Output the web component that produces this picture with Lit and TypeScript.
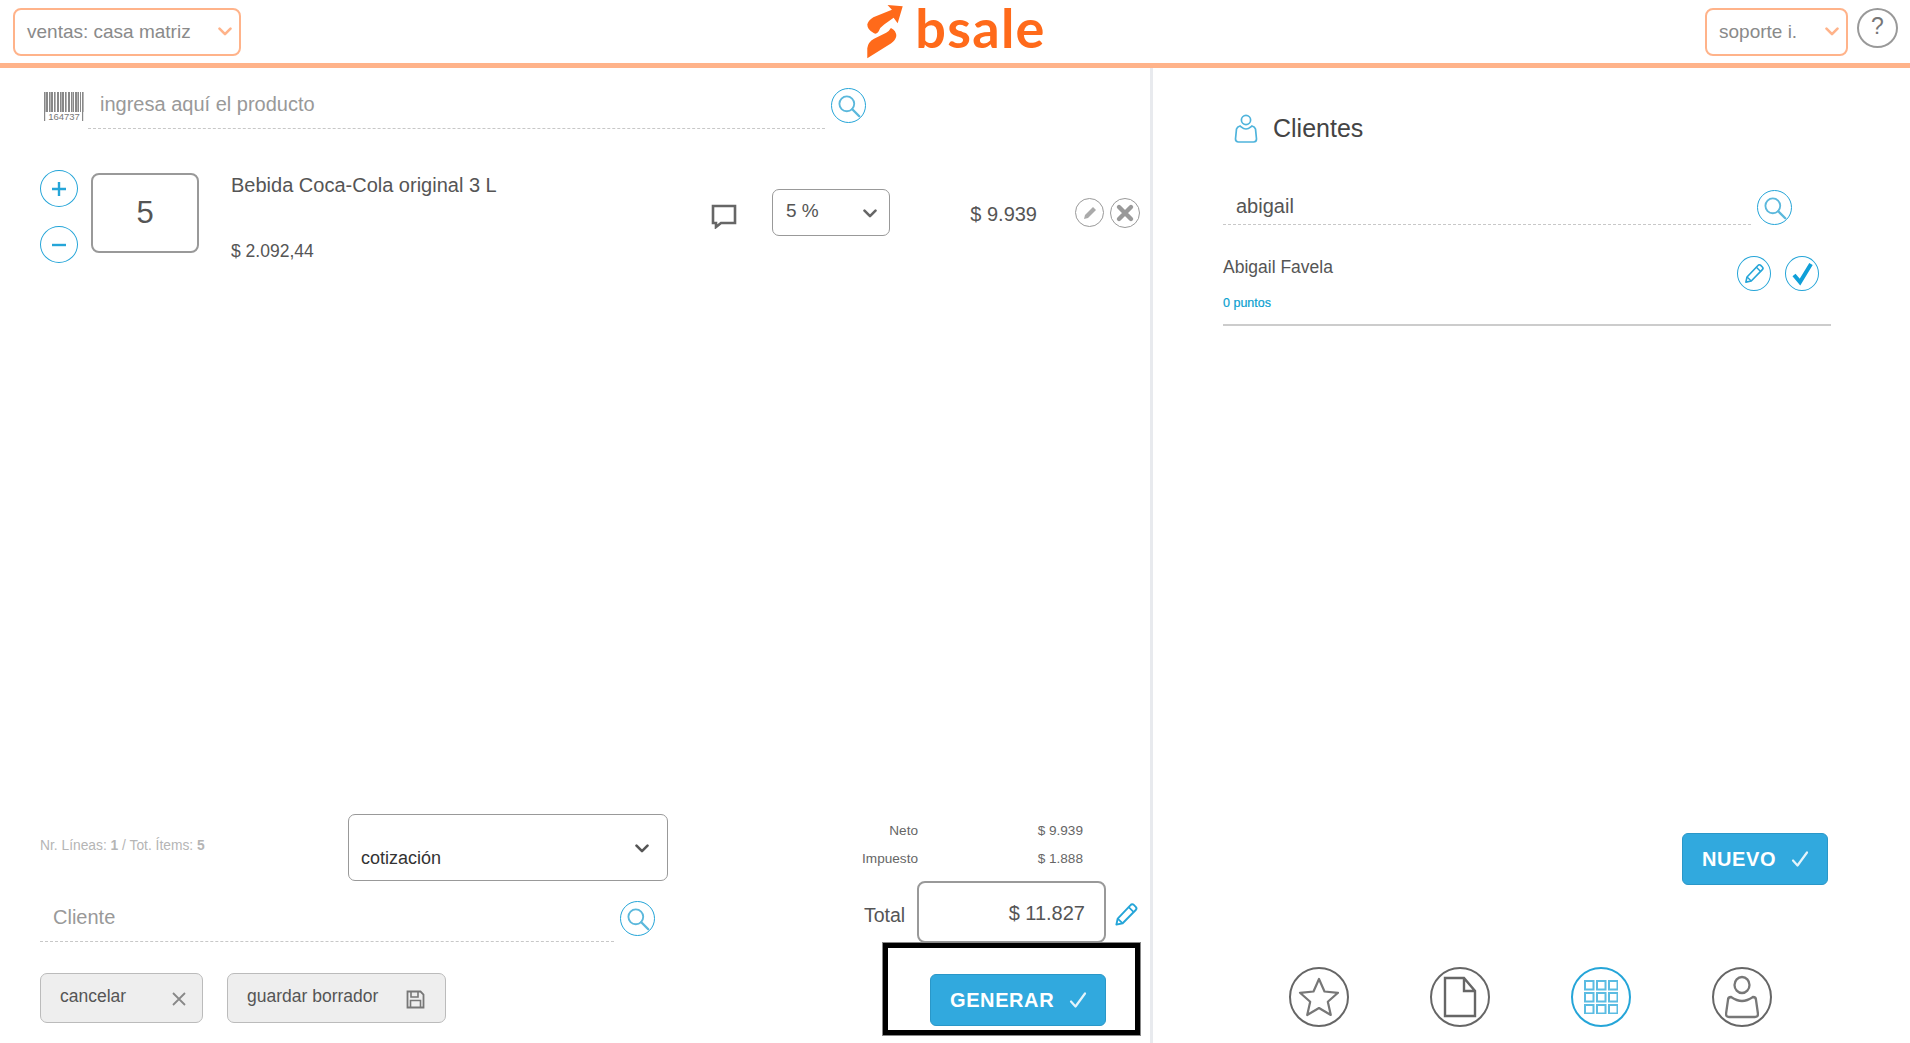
import { LitElement, html, css, svg } from "lit";
import { customElement } from "lit/decorators.js";

const chevron = (c: string, w = 14, sw = 2.6) => html`<svg width=${w} height=${w * 0.65} viewBox="0 0 14 9"><path d="M1.5 1.5 7 7l5.5-5.5" fill="none" stroke=${c} stroke-width=${sw} stroke-linecap="round" stroke-linejoin="round"/></svg>`;
const searchIcon = html`<span class="circ search"><svg width="24" height="24" viewBox="0 0 22 22"><circle cx="9" cy="9" r="6.8" fill="none" stroke="#5bb8dc" stroke-width="1.7"/><path d="m14 14 6.400 6.400" stroke="#5bb8dc" stroke-width="2.200" stroke-linecap="round"/></svg></span>`;
const pencilPath = svg`<path d="M3 21l1.200-5.400L15.600 3.600a2 2 0 0 1 2.900-.1l1.700 1.700a2 2 0 0 1 0 2.800L8.600 19.800z" fill="none" stroke="#25a5d8" stroke-width="1.700" stroke-linejoin="round"/><path d="M14 5.500l4.600 4.600M4.200 15.600l4.400 4.200" stroke="#25a5d8" stroke-width="1.500" fill="none"/>`;
const tick = (w: number) => html`<svg width=${w} height=${w} viewBox="0 0 20 20"><path d="M3 11.500 7.500 16.500 17 3.500" fill="none" stroke="#e4f4fb" stroke-width="2.200" stroke-linecap="round" stroke-linejoin="round"/></svg>`;
const barcodeBars = [0,2,3,5,7,8,10,13,14,16,18,19,21,24,25,27,29,31,32,34,36,38];

@customElement("app-root")
export class AppRoot extends LitElement {
  static styles = css`
    :host { display: block; width: 1910px; height: 1043px; overflow: hidden; background: #fff; font-family: "Liberation Sans", Arial, sans-serif; color: #555; }
    * { box-sizing: border-box; }
    .header { height: 68px; border-bottom: 5px solid #ffb38a; display: grid; grid-template-columns: 1fr auto 1fr; padding: 8px 12px 0 13px; }
    .hsel { height: 48px; border: 2px solid #ffb38a; border-radius: 8px; display: flex; align-items: center; justify-content: space-between; padding: 0 7px 0 12px; font-size: 19px; color: #8a8a8a; }
    .hsel.a { width: 228px; }
    .hsel.b { width: 143px; }
    .hright { display: flex; justify-content: flex-end; gap: 9px; }
    .help { width: 41px; height: 40px; border: 2px solid #999; border-radius: 50%; display: flex; align-items: center; justify-content: center; font-size: 23px; color: #777; padding-bottom: 3px; }
    .logo { display: flex; align-items: flex-start; gap: 12px; margin-top: -3px; margin-left: 2px; }
    .word { font-family: "Lato", sans-serif; font-weight: 700; font-size: 54px; line-height: 52px; color: #ff6a1a; letter-spacing: 1.300px; margin-top: -3px; }
    .main { display: flex; height: 975px; }
    .left { width: 1153px; border-right: 3px solid #e8eaee; display: flex; flex-direction: column; }
    .right { flex: 1; padding: 43px 79px 16px 70px; display: flex; flex-direction: column; }
    .circ { flex: none; display: flex; align-items: center; justify-content: center; border-radius: 50%; border: 1.5px solid #25a5d8; }
    .circ.search { width: 35px; height: 35px; }
    .field { flex: none; height: 41px; border-bottom: 1px dashed #c8c8c8; font-size: 20px; padding-left: 12px; line-height: 32px; color: #999; }
    .prod { display: flex; margin-top: 20px; padding-left: 44px; }
    .barcode { margin-top: 4px; margin-right: 4px; flex: none; }
    .prod .field { width: 737px; margin-right: 6px; line-height: 33px; }
    .line { display: flex; margin-top: 41px; padding-left: 40px; height: 93px; }
    .steps { display: flex; flex-direction: column; gap: 19px; margin-right: 13px; }
    .step { width: 38px; height: 37px; }
    .qty { width: 108px; height: 80px; margin-top: 3px; border: 2px solid #999; border-radius: 8px; display: flex; align-items: center; justify-content: center; font-size: 31px; color: #555; margin-right: 32px; padding-bottom: 1px; }
    .pinfo { width: 480px; }
    .pname { font-size: 20px; line-height: 24px; margin-top: 3px; }
    .pprice { font-size: 17.500px; line-height: 22px; margin-top: 43px; }
    .comment { margin-top: 34px; width: 61px; flex: none; }
    .pct { flex: none; width: 118px; height: 47px; margin-top: 19px; border: 1px solid #999; border-radius: 7px; display: flex; align-items: center; justify-content: space-between; padding: 0 12px 4px 13px; font-size: 19px; }
    .pct svg { margin-top: 6px; }
    .ltotal { flex: none; width: 185px; text-align: right; padding-right: 38px; font-size: 20px; line-height: 24px; margin-top: 32px; }
    .act { flex: none; width: 29px; height: 29px; margin-top: 28px; border: 1px solid #999; }
    .act.x { margin-left: 6px; width: 30px; height: 30px; }
    .spacer { flex: 1; }
    .bottom { display: flex; height: 229px; padding-left: 40px; }
    .bl { width: 628px; flex: none; }
    .r1 { display: flex; height: 67px; }
    .stats { width: 308px; font-size: 13.800px; color: #b5b5b5; line-height: 16px; padding-top: 24px; }
    .stats b { font-weight: 700; }
    .doc { width: 320px; border: 1px solid #999; border-radius: 7px; position: relative; font-size: 18px; color: #333; display: flex; justify-content: space-between; padding: 33px 18px 0 12px; }
    .doc svg { margin-top: -4px; }
    .r2 { display: flex; margin-top: 20px; }
    .r2 .field { width: 574px; margin-right: 6px; padding-left: 13px; line-height: 32px; }
    .r3 { display: flex; gap: 24px; margin-top: 31px; }
    .gbtn { height: 50px; background: #eee; border: 1px solid #bbb; border-radius: 7px; display: flex; align-items: center; justify-content: space-between; font-size: 17.500px; color: #555; padding: 0 20px 4px 19px; }
    .gbtn svg { margin-top: 6px; }
    .gbtn.c { width: 163px; padding-right: 16px; }
    .gbtn.s { width: 219px; }
    .br { margin-left: 196px; width: 276px; position: relative; }
    .trow { display: grid; grid-template-columns: 60px 165px; margin-left: -6px; height: 28px; font-size: 13.600px; line-height: 28px; text-align: right; color: #666; }
    .trow:first-child { margin-top: 3px; }
    .total { display: flex; margin-top: 8px; }
    .tl { width: 53px; font-size: 19.500px; line-height: 24px; padding-top: 22px; }
    .tbox { width: 189px; height: 62px; border: 2px solid #999; border-radius: 8px; text-align: right; padding: 18px 19px 0 0; font-size: 20px; line-height: 24px; }
    .tp { margin: 20px 0 0 7px; }
    .go { margin: 31px 0 0 66px; width: 176px; height: 52px; }
    .btn { background: #31a9de; border: 1px solid #2a97c8; border-radius: 6px; color: #fff; font-weight: 700; font-size: 20px; letter-spacing: 0.6px; display: flex; align-items: center; justify-content: space-between; padding: 0 17px 0 19px; }
    .frame { position: absolute; left: 19px; top: 129px; width: 257px; height: 92px; border: 5px solid #000; outline: 1px solid #888; pointer-events: none; }
    .chead { display: flex; align-items: center; gap: 15px; font-size: 25px; color: #444; height: 34px; padding-left: 11px; }
    .csearch { display: flex; margin-top: 45px; }
    .csearch .field { width: 528px; height: 35px; color: #555; line-height: 32px; margin-right: 6px; padding-left: 13px; }
    .cust { margin-top: 20px; height: 81px; border-bottom: 2px solid #ccc; width: 608px; display: flex; justify-content: space-between; padding-right: 12px; }
    .cname { font-size: 17.500px; line-height: 22px; margin-top: 11px; }
    .cpts { font-size: 12.500px; color: #0a9fd0; line-height: 16px; margin-top: 17px; -webkit-text-stroke: 0.2px #0a9fd0; }
    .cact { display: flex; gap: 14px; margin-top: 11px; }
    .cact .circ { width: 34px; height: 35px; }
    .rsp { flex: 1; }
    .nuevo { align-self: flex-end; width: 146px; height: 52px; margin-right: 3px; padding: 0 17px 0 19px; }
    .nav { display: flex; gap: 81px; margin-top: 82px; margin-left: 66px; }
    .nb { width: 60px; height: 60px; border: 2px solid #666; border-radius: 50%; display: flex; align-items: center; justify-content: center; flex: none; }
    .nb.on { border-color: #25a5d8; }
  `;

  render() {
    return html`
      <div class="header">
        <div><div class="hsel a"><span>ventas: casa matriz</span>${chevron("#ffb38a")}</div></div>
        <div class="logo">
          <svg width="36" height="54" viewBox="22 14 105 160"><path d="M22 72Q24 60 40 50L95 28 82 14 127 18 112 68 100 52 72 72Q60 80 56 92 50 102 42 98 22 88 22 72Z" fill="#ff6a1a"/><path d="M92 82Q108 90 108 106 106 118 92 128L22 172V142Q24 124 42 114L78 96Q88 90 92 82Z" fill="#ff6a1a"/></svg>
          <span class="word">bsale</span>
        </div>
        <div class="hright">
          <div class="hsel b"><span>soporte i.</span>${chevron("#ffb38a")}</div>
          <div class="help">?</div>
        </div>
      </div>
      <div class="main">
        <div class="left">
          <div class="prod">
            <svg class="barcode" width="40" height="29" viewBox="0 0 40 29">
              ${barcodeBars.map((x, i) => svg`<rect x=${x} y="0" width=${i % 3 === 0 ? 1.6 : 1} height="20" fill="#888"/>`)}
              <rect x="0" y="20" width="1.200" height="9" fill="#888"/><rect x="38" y="20" width="1.200" height="9" fill="#888"/>
              <text x="20" y="28" font-size="9.500" text-anchor="middle" fill="#777" font-family="Liberation Sans">164737</text>
            </svg>
            <div class="field">ingresa aquí el producto</div>
            ${searchIcon}
          </div>
          <div class="line">
            <div class="steps">
              <span class="circ step"><svg width="18" height="18" viewBox="0 0 18 18"><path d="M9 2v14M2 9h14" stroke="#25a5d8" stroke-width="2.400"/></svg></span>
              <span class="circ step"><svg width="18" height="18" viewBox="0 0 18 18"><path d="M2 9h14" stroke="#25a5d8" stroke-width="2.400"/></svg></span>
            </div>
            <div class="qty">5</div>
            <div class="pinfo">
              <div class="pname">Bebida Coca-Cola original 3 L</div>
              <div class="pprice">$ 2.092,44</div>
            </div>
            <div class="comment"><svg width="26" height="25" viewBox="0 0 26 25"><path d="M2 2h22v17H10l-5 4v-4H2z" fill="none" stroke="#666" stroke-width="2.600"/></svg></div>
            <div class="pct"><span>5 %</span>${chevron("#666")}</div>
            <div class="ltotal">$ 9.939</div>
            <span class="circ act"><svg width="16" height="16" viewBox="0 0 16 16"><path d="M2 14l1-4 8-8 3 3-8 8z" fill="#aaa"/></svg></span>
            <span class="circ act x"><svg width="20" height="20" viewBox="0 0 20 20"><path d="M4 4l12 12M16 4 4 16" stroke="#999" stroke-width="4.400" stroke-linecap="round"/></svg></span>
          </div>
          <div class="spacer"></div>
          <div class="bottom">
            <div class="bl">
              <div class="r1">
                <div class="stats">Nr. Líneas: <b>1</b> / Tot. Ítems: <b>5</b></div>
                <div class="doc"><span>cotización</span>${chevron("#555")}</div>
              </div>
              <div class="r2">
                <div class="field">Cliente</div>
                ${searchIcon}
              </div>
              <div class="r3">
                <div class="gbtn c"><span>cancelar</span><svg width="14" height="14" viewBox="0 0 14 14"><path d="M1 1l12 12M13 1 1 13" stroke="#888" stroke-width="1.800"/></svg></div>
                <div class="gbtn s"><span>guardar borrador</span><svg width="19" height="19" viewBox="0 0 19 19"><path d="M1.500 1.500h13l3 3v13h-16z" fill="#eee" stroke="#777" stroke-width="1.800"/><path d="M5 2v5h7V2M4.500 17v-6.500h10V17" fill="none" stroke="#777" stroke-width="1.600"/></svg></div>
              </div>
            </div>
            <div class="br">
              <div class="trow"><span>Neto</span><span>$ 9.939</span></div>
              <div class="trow"><span>Impuesto</span><span>$ 1.888</span></div>
              <div class="total">
                <div class="tl">Total</div>
                <div class="tbox">$ 11.827</div>
                <svg class="tp" width="27" height="27" viewBox="0 0 24 24">${pencilPath}</svg>
              </div>
              <div class="btn go"><span>GENERAR</span>${tick(20)}</div>
              <div class="frame"></div>
            </div>
          </div>
        </div>
        <div class="right">
          <div class="chead">
            <svg width="24" height="29" viewBox="0 0 24 29"><circle cx="12" cy="6" r="4.600" fill="none" stroke="#4fb4dc" stroke-width="1.700"/><path d="M6 12c2 1.500 3 3 6 3s4-1.500 6-3c2 .5 3 1.500 3.500 3l1 10c0 2-1 3-3 3H4.500c-2 0-3-1-3-3l1-10C3 13.500 4 12.500 6 12z" fill="none" stroke="#4fb4dc" stroke-width="1.700"/></svg>
            <span>Clientes</span>
          </div>
          <div class="csearch">
            <div class="field">abigail</div>
            ${searchIcon}
          </div>
          <div class="cust">
            <div>
              <div class="cname">Abigail Favela</div>
              <div class="cpts">0 puntos</div>
            </div>
            <div class="cact">
              <span class="circ"><svg width="23" height="23" viewBox="0 0 24 24">${pencilPath}</svg></span>
              <span class="circ"><svg width="25" height="25" viewBox="0 0 25 25"><path d="M4 14l6 7L21 3" fill="none" stroke="#109fd8" stroke-width="4"/></svg></span>
            </div>
          </div>
          <div class="rsp"></div>
          <div class="btn nuevo"><span>NUEVO</span>${tick(20)}</div>
          <div class="nav">
            <span class="nb"><svg width="42" height="42" viewBox="0 0 42 42"><path d="M21 3l5.500 12.500 13.500 1.300-10.200 9 3 13.200L21 32l-11.800 7 3-13.200-10.200-9 13.500-1.300z" fill="none" stroke="#777" stroke-width="2.200" stroke-linejoin="round"/></svg></span>
            <span class="nb"><svg width="34" height="42" viewBox="0 0 34 42"><path d="M2 2h19l11 13v25H2zM21 2v13h11" fill="none" stroke="#666" stroke-width="2.400"/></svg></span>
            <span class="nb on"><svg width="34" height="34" viewBox="0 0 34 34">${[0,12,24].flatMap((x) => [0,12,24].map((y) => svg`<rect x=${x + 1} y=${y + 1} width="8.500" height="8.500" fill="none" stroke="#5bbce2" stroke-width="2"/>`))}</svg></span>
            <span class="nb"><svg width="34" height="44" viewBox="0 0 34 44"><ellipse cx="17" cy="10" rx="7.500" ry="8" fill="none" stroke="#777" stroke-width="2.300"/><path d="M6 22c3 2 6 4 11 4s8-2 11-4c2 0 3 1 3 3l2 14c0 2-1 3-3 3H4c-2 0-3-1-3-3l2-14c0-2 1-3 3-3z" fill="none" stroke="#777" stroke-width="2.300"/></svg></span>
          </div>
        </div>
      </div>
    `;
  }
}
